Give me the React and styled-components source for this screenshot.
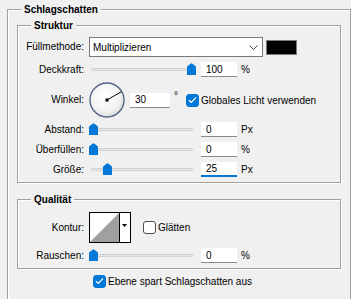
import React from 'react';
import styled, { createGlobalStyle } from 'styled-components';

const GlobalStyle = createGlobalStyle`
  body {
    margin: 0;
    background: #f0f0f0;
    font-family: "Liberation Sans", Arial, sans-serif;
    font-size: 10px;
    color: #000;
    overflow: hidden;
  }
`;

const Page = styled.div`
  width: 351px;
  height: 299px;
  box-sizing: border-box;
  padding: 3px 0 0 7px;
  overflow: hidden;
`;

const Group = styled.fieldset`
  margin: ${({ $top }) => $top || 0}px 0 0 0;
  padding: ${({ $pad }) => $pad};
  box-sizing: border-box;
  width: ${({ $w }) => ($w ? `${$w}px` : 'auto')};
  border: 1px solid #a0a0a0;
  box-shadow: inset 1px 1px 0 #fff, 1px 1px 0 #fff;
  min-width: 0;
`;

const Legend = styled.legend`
  padding: 0 3px;
  margin-left: ${({ $indent }) => $indent}px;
  font-weight: bold;
  line-height: 13px;
  background: #f0f0f0;
`;

const Row = styled.div`
  display: flex;
  align-items: center;
  height: ${({ $h }) => $h}px;
  margin-top: ${({ $mt }) => $mt || 0}px;
`;

const Label = styled.span`
  flex: none;
  width: 66px;
  margin-right: 5px;
  text-align: right;
  line-height: 12px;
`;

const Select = styled.div`
  display: flex;
  align-items: center;
  justify-content: space-between;
  box-sizing: border-box;
  width: 174px;
  height: 20px;
  padding: 0 4px 0 3px;
  background: #fff;
  border: 1px solid #7a7a7a;
`;

const Swatch = styled.div`
  width: 31px;
  height: 15px;
  margin-left: 3px;
  box-sizing: border-box;
  background: #000;
  border: 1px solid #7d7d7d;
`;

const SliderBox = styled.div`
  position: relative;
  flex: none;
  width: 107px;
  height: 15px;
`;

const Track = styled.div`
  margin: 6px 3px 0 2px;
  height: 3px;
  box-sizing: border-box;
  background: #e6e6e6;
  border: 1px solid #d2d2d2;
  border-radius: 1px;
`;

const Thumb = styled.svg`
  position: absolute;
  top: 1px;
  width: 9px;
  height: 12px;
`;

const Field = styled.input`
  flex: none;
  box-sizing: border-box;
  width: ${({ $w }) => $w || 36}px;
  height: 15px;
  margin-left: 5px;
  padding: 0 0 0 5px;
  border: none;
  border-bottom: ${({ $focus }) => ($focus ? '2px solid #0078d7' : '1px solid #8a8a8a')};
  background: #fff;
  font: inherit;
  color: #000;
  outline: none;
`;

const Unit = styled.span`
  margin-left: 4px;
  align-self: ${({ $top }) => ($top ? 'flex-start' : 'center')};
  margin-top: ${({ $top }) => ($top ? '8px' : '0')};
`;

const Check = styled.span`
  flex: none;
  display: inline-flex;
  align-items: center;
  justify-content: center;
  box-sizing: border-box;
  width: 13px;
  height: 13px;
  margin-left: ${({ $ml }) => $ml || 0}px;
  margin-right: 2px;
  border-radius: 3px;
  background: ${({ $on }) => ($on ? '#0078d7' : '#fff')};
  border: 1px solid ${({ $on }) => ($on ? '#0078d7' : '#4d4d4d')};
`;

const Contour = styled.div`
  display: flex;
  box-sizing: border-box;
  width: 42px;
  height: 31px;
  border: 1px solid #000;
  background: #fff;
`;

const ContourArrow = styled.div`
  display: flex;
  justify-content: center;
  width: 10px;
  border-left: 1px solid #000;
  padding-top: 11px;
  box-sizing: border-box;
`;

const CheckRow = styled(Row)`
  margin-left: 76px;
`;

function Slider({ pos }) {
  return (
    <SliderBox>
      <Track />
      <Thumb style={{ left: `${pos * 98}px` }} viewBox="0 0 9 12">
        <path d="M0 12V4.2Q0 3.5 0.6 3L3.9 0.4Q4.5 0 5.1 0.4L8.4 3Q9 3.5 9 4.2V12Z" fill="#0078d7" />
      </Thumb>
    </SliderBox>
  );
}

function Tick() {
  return (
    <svg width="9" height="8" viewBox="0 0 9 8">
      <path d="M1 4.2L3.3 6.4L8 1.4" fill="none" stroke="#fff" strokeWidth="1.3" />
    </svg>
  );
}

function Dial() {
  return (
    <svg width="36" height="36" viewBox="0 0 36 36">
      <defs>
        <radialGradient id="dialFill" cx="0.45" cy="0.4" r="0.6">
          <stop offset="0" stopColor="#ffffff" />
          <stop offset="0.7" stopColor="#f3f3f3" />
          <stop offset="1" stopColor="#dcdcdc" />
        </radialGradient>
      </defs>
      <circle cx="18" cy="18" r="17" fill="url(#dialFill)" stroke="#56668a" strokeWidth="1.4" />
      <line x1="18" y1="18" x2="32.7" y2="9.5" stroke="#000" strokeWidth="1" />
      <rect x="16.5" y="16.5" width="3" height="3" fill="#000" />
    </svg>
  );
}

export default function App() {
  return (
    <Page>
      <GlobalStyle />
      <Group $w={344} $pad="3px 9px 40px 9px">
        <Legend $indent={4}>Schlagschatten</Legend>

        <Group $pad="5px 0 5px 0">
          <Legend $indent={13}>Struktur</Legend>
          <Row $h={20}>
            <Label>Füllmethode:</Label>
            <Select>
              <span>Multiplizieren</span>
              <svg width="9" height="5" viewBox="0 0 9 5">
                <polyline points="0.5,0.5 4.5,4.5 8.5,0.5" fill="none" stroke="#444" strokeWidth="1" />
              </svg>
            </Select>
            <Swatch />
          </Row>
          <Row $h={15} $mt={5}>
            <Label>Deckkraft:</Label>
            <Slider pos={1} />
            <Field readOnly value="100" />
            <Unit>%</Unit>
          </Row>
          <Row $h={36} $mt={5}>
            <Label>Winkel:</Label>
            <Dial />
            <Field readOnly value="30" $w={40} />
            <Unit $top>°</Unit>
            <Check $on $ml={8}><Tick /></Check>
            <span>Globales Licht verwenden</span>
          </Row>
          <Row $h={15} $mt={4}>
            <Label>Abstand:</Label>
            <Slider pos={0} />
            <Field readOnly value="0" />
            <Unit>Px</Unit>
          </Row>
          <Row $h={15} $mt={5}>
            <Label>Überfüllen:</Label>
            <Slider pos={0} />
            <Field readOnly value="0" />
            <Unit>%</Unit>
          </Row>
          <Row $h={15} $mt={5}>
            <Label>Größe:</Label>
            <Slider pos={0.143} />
            <Field readOnly value="25" $focus />
            <Unit>Px</Unit>
          </Row>
        </Group>

        <Group $top={10} $pad="6px 0 5px 0">
          <Legend $indent={13}>Qualität</Legend>
          <Row $h={31}>
            <Label>Kontur:</Label>
            <Contour>
              <svg width="29" height="29" viewBox="0 0 29 29">
                <polygon points="0,29 29,0 29,29" fill="#a0a0a0" />
              </svg>
              <ContourArrow>
                <svg width="5" height="3" viewBox="0 0 5 3">
                  <polygon points="0,0 5,0 2.5,3" fill="#000" />
                </svg>
              </ContourArrow>
            </Contour>
            <Check $ml={12} />
            <span>Glätten</span>
          </Row>
          <Row $h={15} $mt={5}>
            <Label>Rauschen:</Label>
            <Slider pos={0} />
            <Field readOnly value="0" />
            <Unit>%</Unit>
          </Row>
        </Group>

        <CheckRow $h={14} $mt={5}>
          <Check $on><Tick /></Check>
          <span>Ebene spart Schlagschatten aus</span>
        </CheckRow>
      </Group>
    </Page>
  );
}
